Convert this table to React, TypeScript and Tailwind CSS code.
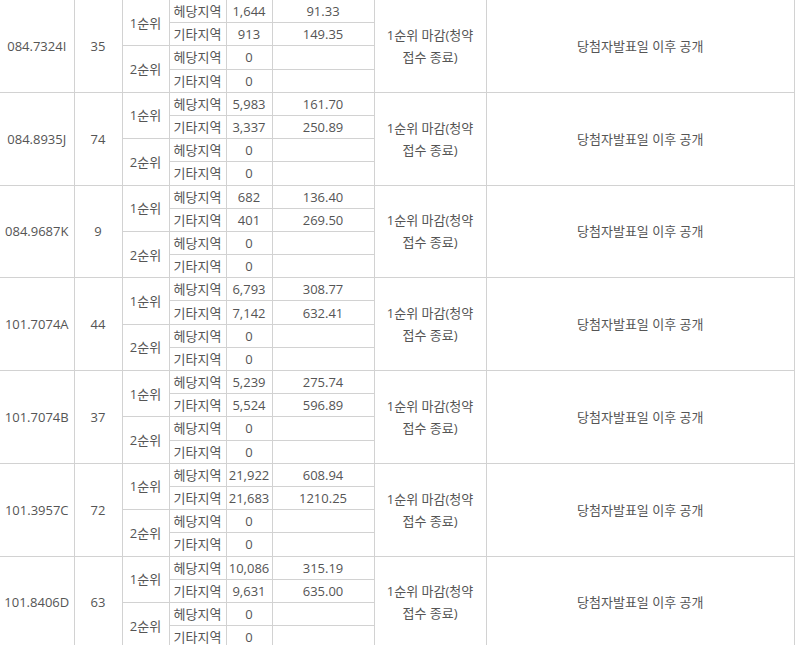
const rows = [
  { type: '084.7324I', units: '35', a: ['1,644', '91.33'], b: ['913', '149.35'] },
  { type: '084.8935J', units: '74', a: ['5,983', '161.70'], b: ['3,337', '250.89'] },
  { type: '084.9687K', units: '9', a: ['682', '136.40'], b: ['401', '269.50'] },
  { type: '101.7074A', units: '44', a: ['6,793', '308.77'], b: ['7,142', '632.41'] },
  { type: '101.7074B', units: '37', a: ['5,239', '275.74'], b: ['5,524', '596.89'] },
  { type: '101.3957C', units: '72', a: ['21,922', '608.94'], b: ['21,683', '1210.25'] },
  { type: '101.8406D', units: '63', a: ['10,086', '315.19'], b: ['9,631', '635.00'] },
]

const cell = 'border border-[#d2d2d2] text-center align-middle p-0'

export default function App() {
  return (
    <div className="h-[645px] w-[800px] overflow-hidden bg-white">
      <table
        className="-mt-[1px] w-[795px] table-fixed border-collapse text-[13px] leading-[22px] text-[#555]"
        style={{ fontFamily: '"Open Sans", "Noto Sans CJK KR", sans-serif' }}
      >
        <colgroup>
          <col className="w-[74px]" />
          <col className="w-[48px]" />
          <col className="w-[47px]" />
          <col className="w-[57px]" />
          <col className="w-[46px]" />
          <col className="w-[102px]" />
          <col className="w-[112px]" />
          <col />
        </colgroup>
        <tbody>
          {rows.map((r) => (
            <>
              <tr key={r.type + '1'} className="h-[23.2px]">
                <td rowSpan={4} className={cell + ' border-l-0'}>{r.type}</td>
                <td rowSpan={4} className={cell}>{r.units}</td>
                <td rowSpan={2} className={cell}>1순위</td>
                <td className={cell}>헤당지역</td>
                <td className={cell}>{r.a[0]}</td>
                <td className={cell}>{r.a[1]}</td>
                <td rowSpan={4} className={cell + ' px-2'}>1순위 마감(청약 접수 종료)</td>
                <td rowSpan={4} className={cell}>당첨자발표일 이후 공개</td>
              </tr>
              <tr key={r.type + '2'} className="h-[23.2px]">
                <td className={cell}>기타지역</td>
                <td className={cell}>{r.b[0]}</td>
                <td className={cell}>{r.b[1]}</td>
              </tr>
              <tr key={r.type + '3'} className="h-[23.2px]">
                <td rowSpan={2} className={cell}>2순위</td>
                <td className={cell}>헤당지역</td>
                <td className={cell}>0</td>
                <td className={cell}></td>
              </tr>
              <tr key={r.type + '4'} className="h-[23.2px]">
                <td className={cell}>기타지역</td>
                <td className={cell}>0</td>
                <td className={cell}></td>
              </tr>
            </>
          ))}
        </tbody>
      </table>
    </div>
  )
}
